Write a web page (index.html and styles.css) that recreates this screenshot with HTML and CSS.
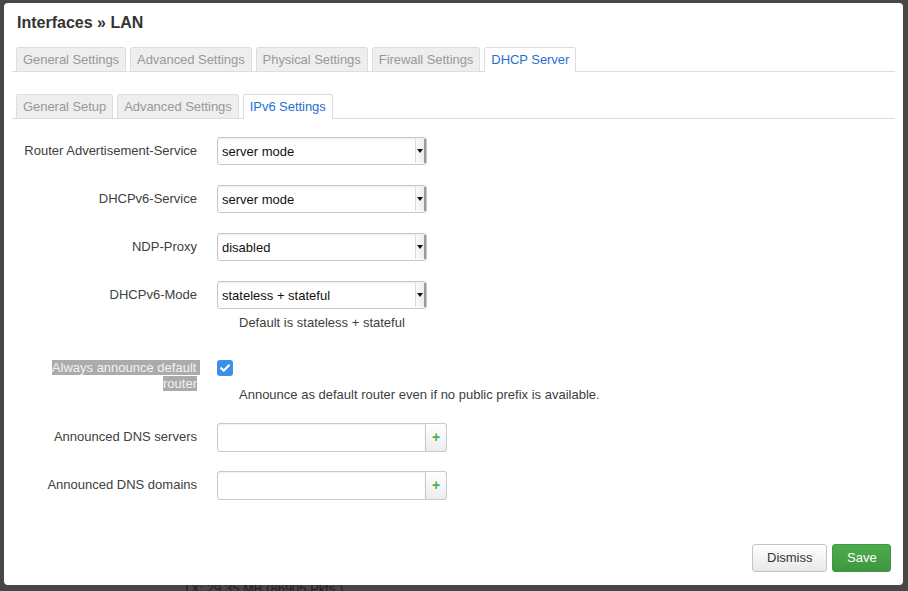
FILE: index.html
```html
<!DOCTYPE html>
<html>
<head>
<meta charset="utf-8">
<title>Interfaces » LAN</title>
<link rel="stylesheet" href="styles.css">
</head>
<body>
<div class="page">
  <div class="page-line">TX: 29.35 MB (86905 Pkts.)</div>
</div>
<div class="modal">
  <h4 class="modal-title">Interfaces » LAN</h4>
  <ul class="tabs tabs-main">
    <li class="tab">General Settings</li>
    <li class="tab">Advanced Settings</li>
    <li class="tab">Physical Settings</li>
    <li class="tab">Firewall Settings</li>
    <li class="tab active">DHCP Server</li>
  </ul>
  <ul class="tabs tabs-sub">
    <li class="tab">General Setup</li>
    <li class="tab">Advanced Settings</li>
    <li class="tab active">IPv6 Settings</li>
  </ul>
  <div class="form">
    <div class="row">
      <label class="label">Router Advertisement-Service</label>
      <div class="field">
        <div class="select"><select><option>server mode</option></select><span class="arrow"></span></div>
      </div>
    </div>
    <div class="row">
      <label class="label">DHCPv6-Service</label>
      <div class="field">
        <div class="select"><select><option>server mode</option></select><span class="arrow"></span></div>
      </div>
    </div>
    <div class="row">
      <label class="label">NDP-Proxy</label>
      <div class="field">
        <div class="select"><select><option>disabled</option></select><span class="arrow"></span></div>
      </div>
    </div>
    <div class="row row-desc">
      <label class="label">DHCPv6-Mode</label>
      <div class="field">
        <div class="select"><select><option>stateless + stateful</option></select><span class="arrow"></span></div>
        <div class="desc desc-select">Default is stateless + stateful</div>
      </div>
    </div>
    <div class="row">
      <label class="label label-check"><span class="sel sel-first">Always announce default&nbsp;</span><br><span class="sel">router</span></label>
      <div class="field">
        <span class="checkbox"><svg width="10" height="8" viewBox="0 0 10 8"><path d="M1.2 4.2 L3.8 6.6 L8.8 1.4" fill="none" stroke="#fff" stroke-width="2.2" stroke-linecap="round" stroke-linejoin="round"/></svg></span>
        <div class="desc desc-check">Announce as default router even if no public prefix is available.</div>
      </div>
    </div>
    <div class="row row-list">
      <label class="label">Announced DNS servers</label>
      <div class="field">
        <div class="dynlist"><input class="text" type="text"><button class="add">+</button></div>
      </div>
    </div>
    <div class="row row-list">
      <label class="label">Announced DNS domains</label>
      <div class="field">
        <div class="dynlist"><input class="text" type="text"><button class="add">+</button></div>
      </div>
    </div>
  </div>
  <div class="footer">
    <button class="btn btn-dismiss">Dismiss</button>
    <button class="btn btn-save">Save</button>
  </div>
</div>
</body>
</html>
```

FILE: styles.css
```css
html, body {
  margin: 0;
  padding: 0;
}
body {
  width: 908px;
  height: 591px;
  overflow: hidden;
  background: #474747;
  font-family: "Liberation Sans", Arial, Helvetica, sans-serif;
  font-size: 13px;
  color: #404040;
  position: relative;
}
.page {
  padding: 581px 0 0 183px;
}
.page-line {
  font-size: 13px;
  line-height: 15px;
  color: #1f1f1f;
}
.modal {
  position: absolute;
  left: 4px;
  top: 3px;
  width: 899px;
  height: 582px;
  background: #fff;
  border-radius: 4px;
  box-sizing: border-box;
  padding: 8px 8px 0 8px;
  display: flex;
  flex-direction: column;
}
.modal-title {
  margin: 0 0 12px 0;
  padding-left: 5px;
  font-size: 16px;
  line-height: 24px;
  font-weight: bold;
  color: #333;
}
.tabs {
  list-style: none;
  margin: 0;
  padding: 0 0 0 4px;
  display: flex;
  gap: 4px;
  border-bottom: 1px solid #ddd;
}
.tabs-sub {
  margin-top: 22px;
}
.tab {
  padding: 3px 6px 3px;
  line-height: 17px;
  background: #eee;
  border: 1px solid #ddd;
  border-bottom: none;
  border-radius: 3px 3px 0 0;
  color: #999;
  white-space: nowrap;
  letter-spacing: -0.05px;
}
.tab.active {
  background: #fff;
  color: #1f6fd0;
  margin-bottom: -1px;
  padding-bottom: 4px;
}
.form {
  margin-top: 18px;
}
.row {
  display: grid;
  grid-template-columns: 185px 1fr;
  column-gap: 20px;
  margin-bottom: 20px;
}
.row-desc {
  margin-bottom: 29px;
}
.row-list {
  margin-bottom: 19px;
}
.label {
  text-align: right;
  line-height: 17px;
  padding-top: 5px;
  color: #404040;
}
.label-check {
  padding-top: 0;
  line-height: 16px;
}
.sel {
  background: #ababab;
  color: #f2f2f2;
}
.sel-first {
  margin-right: -3px;
}
.field {
  display: flex;
  flex-direction: column;
  align-items: flex-start;
}
.select {
  display: flex;
  width: 210px;
  height: 28px;
  box-sizing: border-box;
  border: 1px solid #c6c6c6;
  border-radius: 3px;
  background: #fff;
  box-shadow: inset 0 1px 2px rgba(0, 0, 0, 0.07);
}
.select select {
  appearance: none;
  -webkit-appearance: none;
  flex: 1;
  min-width: 0;
  border: none;
  background: transparent;
  font-family: inherit;
  font-size: 13px;
  color: #111;
  padding: 0 0 0 4px;
  margin: 0;
  outline: none;
}
.arrow {
  width: 8px;
  margin: 1px 0 1px 0;
  background: linear-gradient(to right, #fbfbfb, #ececec);
  border-left: 1px solid #dcdcdc;
  border-right: 2px solid #9a9a9a;
  display: flex;
  align-items: center;
  justify-content: center;
}
.arrow::after {
  content: "";
  width: 0;
  height: 0;
  border-left: 3px solid transparent;
  border-right: 3px solid transparent;
  border-top: 4px solid #111;
}
.desc {
  line-height: 17px;
  color: #404040;
  padding-left: 22px;
}
.desc-select {
  margin-top: 5px;
}
.checkbox {
  width: 16px;
  height: 16px;
  border-radius: 3px;
  background: #3d8ee6;
  display: flex;
  align-items: center;
  justify-content: center;
}
.desc-check {
  margin-top: 10px;
}
.dynlist {
  display: flex;
  height: 29px;
}
.text {
  width: 209px;
  height: 29px;
  box-sizing: border-box;
  border: 1px solid #c9c9c9;
  border-radius: 3px 0 0 3px;
  box-shadow: inset 0 1px 2px rgba(0, 0, 0, 0.07);
  margin: 0;
  padding: 0 4px;
  font-family: inherit;
  font-size: 13px;
  outline: none;
}
.add {
  width: 21px;
  height: 29px;
  box-sizing: border-box;
  margin: 0;
  padding: 0;
  border: 1px solid #c9c9c9;
  border-left: none;
  border-radius: 0 3px 3px 0;
  background: linear-gradient(#ffffff, #ececec);
  color: #4cae4c;
  font-family: inherit;
  font-size: 14px;
  font-weight: bold;
  line-height: 27px;
}
.footer {
  margin-top: auto;
  display: flex;
  justify-content: flex-end;
  gap: 5px;
  padding: 0 4px 13px 0;
}
.btn {
  height: 28px;
  box-sizing: border-box;
  padding: 0 14px;
  border-radius: 3px;
  font-family: inherit;
  font-size: 13px;
  line-height: 26px;
  margin: 0;
}
.btn-dismiss {
  width: 75px;
  border: 1px solid #c4c4c4;
  background: linear-gradient(#ffffff, #e8e8e8);
  color: #333;
}
.btn-save {
  width: 59px;
  border: 1px solid #3f973f;
  background: linear-gradient(#4cad4c, #3f963f);
  color: #fff;
}
```
